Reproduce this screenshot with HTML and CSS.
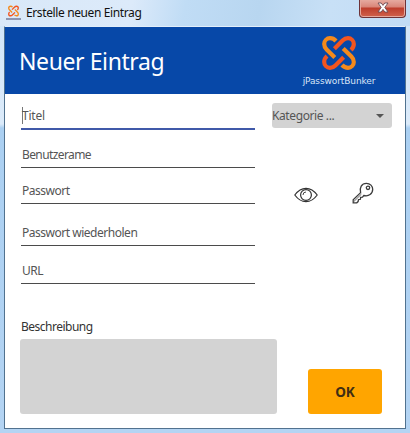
FILE: index.html
```html
<!DOCTYPE html>
<html lang="de">
<head>
<meta charset="utf-8">
<title>Erstelle neuen Eintrag</title>
<link rel="stylesheet" href="styles.css">
</head>
<body>
<svg class="defs" aria-hidden="true">
  <defs>
    <path id="hook" d="M14 5C12 2.8 10.2 2.2 8 2.2A5.8 5.8 0 0 0 2.2 8c0 2.2.8 3.8 2.4 5.4L12.8 21.6"/>
    <g id="knot" fill="none" stroke-width="4.2">
      <use href="#hook" stroke="#f58a1c"/>
      <use href="#hook" stroke="#f4551f" transform="rotate(90 17 17)"/>
      <use href="#hook" stroke="#f58a1c" transform="rotate(180 17 17)"/>
      <use href="#hook" stroke="#f4551f" transform="rotate(270 17 17)"/>
    </g>
  </defs>
</svg>
<div class="window">
  <div class="titlebar">
    <div class="app-icon">
      <svg width="11" height="11" viewBox="0 0 34 34"><use href="#knot"/></svg>
      <i></i>
    </div>
    <span class="caption">Erstelle neuen Eintrag</span>
    <div class="close">
      <svg width="12" height="11" viewBox="0 0 12 11"><path d="M1 1h3.2L6 3.4 7.8 1H11L7.8 5.4 11 10H7.8L6 7.4 4.2 10H1l3.2-4.6z" fill="#fff" stroke="#6b4a52" stroke-width=".9"/></svg>
    </div>
  </div>
  <main class="content">
    <header class="header">
      <h1>Neuer Eintrag</h1>
      <div class="brand">
        <svg width="34" height="34" viewBox="0 0 34 34"><use href="#knot"/></svg>
        <span>jPasswortBunker</span>
      </div>
    </header>
    <div class="form">
      <div class="fields">
        <div class="field title"><b class="caret"></b><span>Titel</span></div>
        <div class="field user"><span>Benutzerame</span></div>
        <div class="field pass"><span>Passwort</span></div>
        <div class="field repeat"><span>Passwort wiederholen</span></div>
        <div class="field url"><span>URL</span></div>
      </div>
      <div class="side">
        <div class="select"><span>Kategorie ...</span><svg width="8" height="4" viewBox="0 0 8 4"><path d="M0 0h8L4 4z" fill="#555"/></svg></div>
        <div class="tools">
          <svg width="24" height="16" viewBox="0 0 24 16" fill="none" stroke="#333" stroke-width="1.2"><path d="M.8 8C4 3.6 7.6 1.3 12 1.3S20 3.6 23.2 8C20 12.4 16.4 14.7 12 14.7S4 12.4.8 8z"/><circle cx="12" cy="8" r="5.4"/><path d="M9 8a3 3 0 0 1 3-3" stroke-width=".9"/></svg>
          <svg class="key" width="22" height="22" viewBox="0 0 22 22" fill="none" stroke="#3c3c3c" stroke-width="1.3"><path d="M8.6 10.6C7.3 5.6 9.6 1.3 14.4 1.3c3.8 0 6.3 2.8 6.3 6 0 4.6-4 7.4-8.9 6.2l-1.3 1.6-1.9.3-.2 1.9-1.9.3-.4 2-1.3 1.2H1.2v-3.1z"/><circle cx="16" cy="5.8" r="1.7"/><path d="M2 19.4l7.4-7.3" stroke-width=".8"/></svg>
        </div>
      </div>
    </div>
    <div class="bottom">
      <div class="description">
        <label>Beschreibung</label>
        <div class="area"></div>
      </div>
      <button class="ok">OK</button>
    </div>
  </main>
</div>
</body>
</html>
```
FILE: styles.css
```css
* { box-sizing: border-box; }
body { margin: 0; font-family: "Noto Sans", "Open Sans", sans-serif; }
.defs { position: absolute; width: 0; height: 0; }
.window {
  width: 410px; height: 433px; overflow: hidden;
  display: flex; flex-direction: column;
  background: linear-gradient(180deg, #c5def5 0, #d2e6f8 28px, #dcebfa 124px, #abd0f2 128px, #b4d4f3 100%);
}
.titlebar {
  height: 26px; flex: none; display: flex; align-items: flex-start; padding-left: 6px;
  background: linear-gradient(100deg, #d9e8f8 0, #dceafa 32%, #c0dcf5 45%, #b8d6f0 63%, #c8e0f6 80%, #c1dcf5 100%);
}
.app-icon { width: 15px; height: 16px; margin-top: 5px; display: flex; flex-direction: column; align-items: center; }
.app-icon svg { display: block; height: 12px; }
.app-icon i { width: 15px; height: 2px; margin-top: 1px; background: #8d96b0; }
.caption { margin: 4px 0 0 5px; font: 12px/18px "Noto Sans", sans-serif; letter-spacing: -.38px; color: #111; white-space: nowrap; }
.close {
  width: 47px; height: 18px; margin: 0 4px 0 auto; display: flex; justify-content: center; padding-top: 2px;
  border: 1px solid #6d3338; border-top: 0; border-radius: 0 0 4px 4px;
  background: linear-gradient(#e6aaa0 0, #d98578 7px, #bd3d2c 8px, #d0624c 100%);
  box-shadow: inset 0 0 0 1px #e5a79c;
}
.content {
  width: 402px; height: 403px; margin-left: 4px; flex: none;
  display: flex; flex-direction: column;
  border: 1px solid #51728f; border-top: 1px solid #e2eefa; background: #fff;
}
.header { height: 67px; flex: none; display: flex; justify-content: space-between; background: #0748a8; color: #fff; }
h1 { margin: 17px 0 0 14px; font: 400 23px/34px "Noto Sans", sans-serif; letter-spacing: -.4px; white-space: nowrap; }
.brand { width: 76px; margin: 9px 28px 0 0; display: flex; flex-direction: column; align-items: center; }
.brand svg { display: block; }
.brand span { margin-top: 4px; font: 9px/14px "DejaVu Sans", sans-serif; letter-spacing: -.1px; color: #d9e5f7; white-space: nowrap; }
.form { height: 226px; display: flex; gap: 17px; padding: 9px 13px 0 16px; }
.fields { width: 234px; display: flex; flex-direction: column; }
.field {
  display: flex; align-items: flex-end; padding: 0 0 4px 1px;
  border-bottom: 1px solid #4b4b4b; color: #555;
  font-size: 12px; line-height: 16px; letter-spacing: -.48px; white-space: nowrap;
}
.user { letter-spacing: -.6px; }
.title { height: 27px; border-bottom: 2px solid #4059a9; letter-spacing: -.2px; }
.caret { width: 1px; height: 17px; margin: 0; background: #777; }
.title .caret { margin-right: -1px; }
.user { height: 38px; }
.pass { height: 36px; }
.repeat { height: 42px; }
.url { height: 38px; }
.side { width: 120px; }
.select {
  height: 25px; display: flex; align-items: center; justify-content: space-between;
  padding-right: 8px; border-radius: 3px; background: #d3d3d3;
  color: #555; font-size: 12px; letter-spacing: -.4px;
}
.tools { display: flex; justify-content: space-between; align-items: flex-start; padding: 59px 18px 0 22px; }
.key { margin-top: -5px; }
.bottom { display: flex; align-items: flex-end; gap: 31px; height: 94px; padding-left: 15px; }
.description { width: 257px; }
label { display: block; padding-left: 1px; font-size: 12px; line-height: 16px; letter-spacing: -.5px; color: #333; margin-bottom: 4px; }
.area { height: 75px; border-radius: 3px; background: #d3d3d3; }
.ok {
  width: 74px; height: 45px; padding: 0; border: 0; border-radius: 3px;
  background: #ffa500; color: #402e14; font: 700 13.5px/20px "Noto Sans", sans-serif;
}
```
